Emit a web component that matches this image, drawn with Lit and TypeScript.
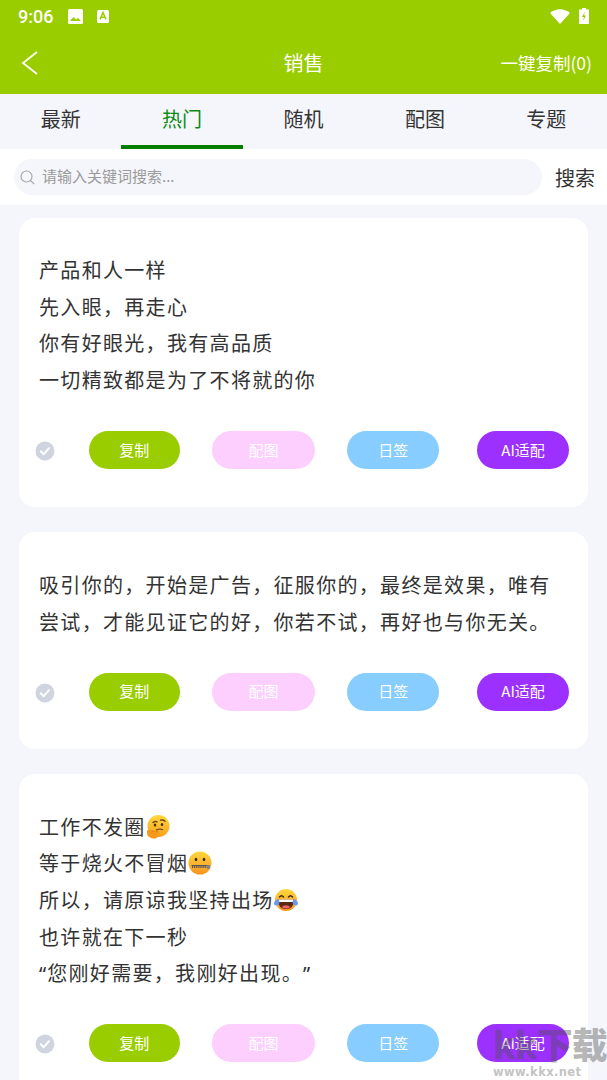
import { LitElement, html, css } from "lit";
import { customElement } from "lit/decorators.js";

const think = html`<svg class="emoji" viewBox="0 0 24 24"><defs><linearGradient id="g1" x1="0" y1="0" x2="0" y2="1"><stop offset="0" stop-color="#ffd83d"/><stop offset="1" stop-color="#f9a01e"/></linearGradient></defs><circle cx="12.500" cy="11" r="11" fill="url(#g1)"/><path d="M7 7.600q2-1.800 4.200-.8M14.500 5.200q2.800-.8 4.500 1" stroke="#6b4a1c" stroke-width="1.400" fill="none" stroke-linecap="round"/><ellipse cx="9" cy="10" rx="1.300" ry="1.600" fill="#4a3213"/><ellipse cx="16" cy="9.500" rx="1.300" ry="1.600" fill="#4a3213"/><path d="M10.500 14.800q3-1.300 6-.2" stroke="#7a4f18" stroke-width="1.400" fill="none" stroke-linecap="round"/><path d="M1 15.500q3.500-1.500 6 .2l6 .6q1.300.9 0 1.900l-3.500.3 3 1.600q-.3 3-3.500 3.400-5.500.4-7.800-3.800z" fill="#f7971c"/><path d="M6 16l6.300.8" stroke="#e5820f" stroke-width=".8" fill="none"/></svg>`;
const zip = html`<svg class="emoji" viewBox="0 0 24 24"><defs><linearGradient id="g2" x1="0" y1="0" x2="0" y2="1"><stop offset="0" stop-color="#ffd83d"/><stop offset="1" stop-color="#f7931e"/></linearGradient></defs><circle cx="12" cy="12" r="11.500" fill="url(#g2)"/><ellipse cx="8" cy="8.500" rx="1.300" ry="1.800" fill="#3d2a10"/><ellipse cx="16" cy="8.500" rx="1.300" ry="1.800" fill="#3d2a10"/><path d="M3.500 14.500h17" stroke="#55585e" stroke-width="1"/><path d="M4 15.800h15.500" stroke="#55585e" stroke-width="2.400" stroke-dasharray="1.200 .9"/><rect x="19" y="14" width="3" height="4" rx=".8" fill="#7b838e"/></svg>`;
const laugh = html`<svg class="emoji" viewBox="0 0 24 24"><defs><linearGradient id="g3" x1="0" y1="0" x2="0" y2="1"><stop offset="0" stop-color="#ffd83d"/><stop offset="1" stop-color="#f7931e"/></linearGradient></defs><circle cx="12" cy="12" r="11" fill="url(#g3)"/><path d="M5.500 9q2-2.500 4 0M14.500 9q2-2.500 4 0" stroke="#3d2a10" stroke-width="1.500" fill="none" stroke-linecap="round"/><path d="M4 11.500h16q0 9.500-8 9.500t-8-9.500z" fill="#5b2a12"/><path d="M4.500 11.500h15l-.4 2.500H4.900z" fill="#fff"/><path d="M7.500 19q4.500-3.500 9 0-4.500 3-9 0z" fill="#f0626e"/><path d="M3.800 11Q0 13 0 15.500q0 2.200 2.500 2 3-.8 3-4zM20.200 11q3.800 2 3.800 4.500 0 2.200-2.500 2-3-.8-3-4z" fill="#6a97f2"/></svg>`;

@customElement("app-root")
export class AppRoot extends LitElement {
  static styles = css`
    :host { display: block; position: relative; width: 607px; height: 1080px; overflow: hidden; background: #f5f6fb; font-family: "Noto Sans CJK SC", "Noto Sans", sans-serif; color: #333; }
    .top { background: #9acd00; height: 94px; color: #fff; display: flex; flex-direction: column; }
    .status { height: 32px; display: flex; align-items: center; padding: 0 18px 0 18px; font: 500 18px Roboto, sans-serif; }
    .status svg { display: block; }
    .status .img { margin-left: 15px; }
    .status .a { margin-left: 14px; }
    .status .sp { flex: 1; }
    .status .bat { margin-left: 9px; }
    .nav { flex: 1; display: grid; grid-template-columns: 1fr auto 1fr; align-items: center; padding: 0 15px; }
    .nav .title { font-size: 20px; line-height: 24px; }
    .nav .right { justify-self: end; font-size: 17.500px; white-space: nowrap; line-height: 24px; }
    .nav svg { display: block; margin-left: 6px; }
    .tabs { height: 55px; display: grid; grid-template-columns: repeat(5, 1fr); background: #f5f6fb; }
    .tab { display: flex; align-items: center; justify-content: center; font-size: 20px; color: #333; border-bottom: 4px solid transparent; box-sizing: border-box; padding-bottom: 2px; }
    .tab.on { color: #0d8a12; border-bottom-color: #008000; }
    .search { height: 56px; background: #fff; display: flex; align-items: center; padding: 0 12px 0 14px; box-sizing: border-box; }
    .pill { width: 528px; height: 36px; border-radius: 18px; background: #f5f6fb; display: flex; align-items: center; padding: 0 0 3px 6px; box-sizing: border-box; color: #9a9a9a; font-size: 15px; gap: 7px; }
    .pill svg { display: block; margin-top: 3px; }
    .go { margin-left: 13px; font-size: 20px; color: #333; }
    .list { padding: 13px 19px 0; display: flex; flex-direction: column; gap: 25px; }
    .card { background: #fff; border-radius: 16px; padding: 34px 19px 37.900px 16px; }
    .text { padding-left: 4px; font-size: 20px; line-height: 36.700px; letter-spacing: 1.320px; color: #333; white-space: nowrap; text-spacing-trim: space-all; }
    .q { font-family: "Noto Sans", sans-serif; letter-spacing: 0; line-height: 1; margin: 0 1px 0 0; }
    .card.two { padding-top: 35px; }
    .emoji { width: 24px; height: 24px; vertical-align: -4px; }
    .row { margin-top: 32.300px; display: flex; align-items: center; }
    .check { width: 20px; height: 20px; display: block; position: relative; top: 1px; }
    .btn { height: 38px; border-radius: 19px; display: flex; align-items: center; justify-content: center; color: #fff; font-size: 15px; padding-bottom: 2px; box-sizing: border-box; }
    .copy { width: 91px; background: #9acd00; margin-left: 34px; }
    .pic { width: 104px; background: #fdcfff; margin-left: 32px; }
    .sign { width: 92px; background: #87cdff; margin-left: 32px; }
    .ai { width: 92px; background: #9b30ff; margin-left: 38px; }
    .wm { position: absolute; left: 490px; top: 1024px; width: 117px; height: 56px; pointer-events: none; }
    .wm .big { position: absolute; left: 3px; top: -2px; font: 900 36px/42px "Noto Sans CJK SC", sans-serif; color: rgba(80,80,80,.42); white-space: nowrap; letter-spacing: -1px; }
    .wm .url { position: absolute; left: 3px; top: 41px; font: 700 11.500px/15px "DejaVu Sans", sans-serif; color: #c4c4c4; letter-spacing: .4px; white-space: nowrap; }
  `;

  private actions() {
    return html`<div class="row">
      <svg class="check" viewBox="0 0 20 20"><circle cx="10" cy="10" r="9.500" fill="#cfd4de"/><path d="M5.800 10.200l2.900 3 5.400-6" stroke="#fff" stroke-width="2" fill="none" stroke-linecap="round" stroke-linejoin="round"/></svg>
      <div class="btn copy">复制</div>
      <div class="btn pic">配图</div>
      <div class="btn sign">日签</div>
      <div class="btn ai">AI适配</div>
    </div>`;
  }

  render() {
    const tabs = ["最新", "热门", "随机", "配图", "专题"];
    return html`
      <div class="top">
        <div class="status">
          <span>9:06</span>
          <svg class="img" width="15" height="15" viewBox="0 0 15 15"><rect width="15" height="15" rx="1.500" fill="#fff"/><path d="M2 12l3.500-4 2.500 2.500 2-1.500 3 3z" fill="#9acd00"/></svg>
          <svg class="a" width="12" height="13" viewBox="0 0 12 13"><rect width="12" height="13" rx="1.500" fill="#fff"/><path d="M3 9.500L6 2.500l3 7M4.200 7.200h3.600" stroke="#9acd00" stroke-width="1.500" fill="none"/></svg>
          <span class="sp"></span>
          <svg width="20" height="15" viewBox="0 0 20 15"><path d="M0 4Q10-3.500 20 4L10 15z" fill="#fff"/></svg>
          <svg class="bat" width="10" height="16" viewBox="0 0 10 16"><path d="M3 0h4v1.500h3V16H0V1.500h3z" fill="#fff"/><path d="M6 3.500L3 9h2l-1 4 3-5.500H5z" fill="#9acd00"/></svg>
        </div>
        <div class="nav">
          <svg width="18" height="26" viewBox="0 0 18 26"><path d="M16 2L2 13l14 11" stroke="#fff" stroke-width="1.800" fill="none"/></svg>
          <div class="title">销售</div>
          <div class="right">一键复制(0)</div>
        </div>
      </div>
      <div class="tabs">${tabs.map((t, i) => html`<div class="tab ${i === 1 ? "on" : ""}">${t}</div>`)}</div>
      <div class="search">
        <div class="pill">
          <svg width="15" height="15" viewBox="0 0 15 15"><circle cx="6.500" cy="6.500" r="5.500" stroke="#a8a8a8" stroke-width="1.200" fill="none"/><path d="M10.500 10.500l3.700 3.700" stroke="#a8a8a8" stroke-width="1.200"/></svg>
          <span>请输入关键词搜索...</span>
        </div>
        <div class="go">搜索</div>
      </div>
      <div class="list">
        <div class="card">
          <div class="text">产品和人一样<br />先入眼，再走心<br />你有好眼光，我有高品质<br />一切精致都是为了不将就的你</div>
          ${this.actions()}
        </div>
        <div class="card two">
          <div class="text">吸引你的，开始是广告，征服你的，最终是效果，唯有<br />尝试，才能见证它的好，你若不试，再好也与你无关。</div>
          ${this.actions()}
        </div>
        <div class="card two">
          <div class="text">工作不发圈${think}<br />等于烧火不冒烟${zip}<br />所以，请原谅我坚持出场${laugh}<br />也许就在下一秒<br /><span class="q">“</span>您刚好需要，我刚好出现。<span class="q">”</span></div>
          ${this.actions()}
        </div>
      </div>
      <div class="wm"><div class="big">kk下载</div><div class="url">www.kkx.net</div></div>
    `;
  }
}
